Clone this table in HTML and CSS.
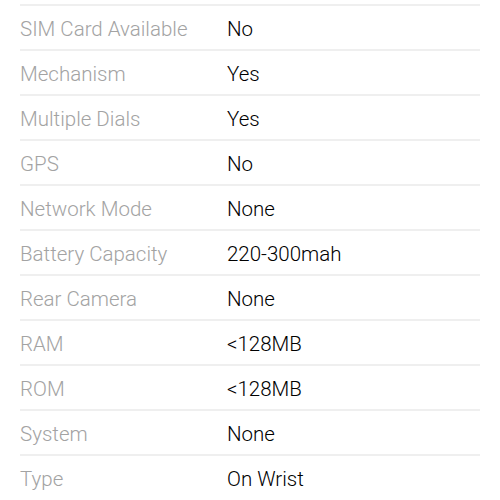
FILE: index.html
```html
<!DOCTYPE html>
<html>
	<head>
		<meta charset="utf-8">
		<title>Specifications</title>
		<link rel="stylesheet" href="styles.css">
	</head>
	<body>
		<div class="specList">
			<div class="specRow"><span class="specName">SIM Card Available</span><span class="specValue">No</span></div>
			<div class="specRow"><span class="specName">Mechanism</span><span class="specValue">Yes</span></div>
			<div class="specRow"><span class="specName">Multiple Dials</span><span class="specValue">Yes</span></div>
			<div class="specRow"><span class="specName">GPS</span><span class="specValue">No</span></div>
			<div class="specRow"><span class="specName">Network Mode</span><span class="specValue">None</span></div>
			<div class="specRow"><span class="specName">Battery Capacity</span><span class="specValue">220-300mah</span></div>
			<div class="specRow"><span class="specName">Rear Camera</span><span class="specValue">None</span></div>
			<div class="specRow"><span class="specName">RAM</span><span class="specValue">&lt;128MB</span></div>
			<div class="specRow"><span class="specName">ROM</span><span class="specValue">&lt;128MB</span></div>
			<div class="specRow"><span class="specName">System</span><span class="specValue">None</span></div>
			<div class="specRow"><span class="specName">Type</span><span class="specValue">On Wrist</span></div>
		</div>
	</body>
</html>
```

FILE: styles.css
```css
* {
	margin: 0;
	padding: 0;
}
body {
	background-color: #fff;
	font-family: Roboto, "Liberation Sans", sans-serif;
	padding-top: 4px;
}
.specList {
	margin: 0 20px;
}
.specRow {
	display: flex;
	align-items: center;
	padding-top: 2px;
	border-top: 2px solid #efefef;
	height: 41px;
	font-size: 20.5px;
	font-weight: 300;
}
.specName {
	width: 207px;
	color: #a3a3a3;
}
.specValue {
	color: #000;
}
```
